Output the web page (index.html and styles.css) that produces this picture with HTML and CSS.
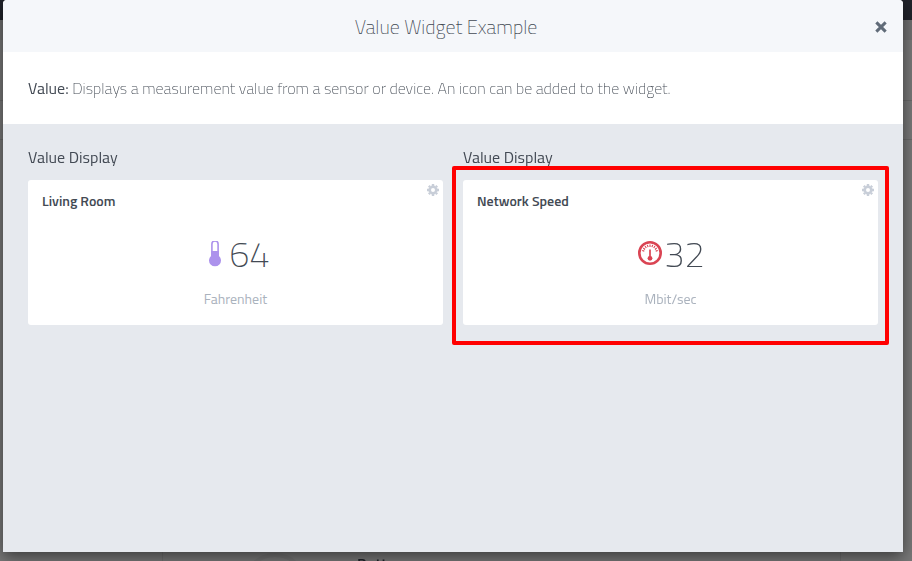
FILE: index.html
```html
<!DOCTYPE html>
<html lang="en">
<head>
    <meta charset="UTF-8">
    <meta name="viewport" content="width=device-width, initial-scale=1.0">
    <title>Value Widget Example</title>
    <link rel="stylesheet" href="styles.css">
</head>
<body>
    <!-- Dashboard behind the modal -->
    <div class="page" aria-hidden="true">
        <div class="navbar"></div>
        <div class="toolbar"></div>
        <div class="page-row"></div>
        <div class="page-row-small"></div>
        <div class="page-main"></div>
        <div class="page-panel">
            <div class="ring"></div>
            <div class="panel-title">Button</div>
        </div>
    </div>

    <div class="modal-wrap">
        <div class="modal" role="dialog" aria-labelledby="modal-title">
            <div class="modal-header">
                <h1 class="modal-title" id="modal-title">Value Widget Example</h1>
                <button class="close-btn" type="button" aria-label="Close">
                    <svg width="12" height="12" viewBox="0 0 12 12">
                        <path d="M2.4 2.4L9.6 9.6M9.6 2.4L2.4 9.6" fill="none" stroke="#606b78" stroke-width="3" stroke-linecap="square"/>
                    </svg>
                </button>
            </div>

            <p class="description"><strong>Value:</strong> Displays a measurement value from a sensor or device. An icon can be added to the widget.</p>

            <div class="widgets">
                <section class="widget">
                    <h2 class="widget-label">Value Display</h2>
                    <div class="card">
                        <button class="gear-btn" type="button" aria-label="Settings">
                            <svg width="12" height="12" viewBox="0 0 12 12">
                                <circle cx="6" cy="6" r="3.3" fill="none" stroke="#c8ced8" stroke-width="2.6"/>
                                <path d="M6 0V2M6 10V12M0 6H2M10 6H12M1.8 1.8L3 3M9 9L10.2 10.2M10.2 1.8L9 3M3 9L1.8 10.2" stroke="#c8ced8" stroke-width="2.4"/>
                            </svg>
                        </button>
                        <h3 class="card-title">Living Room</h3>
                        <div class="value">
                            <svg width="24" height="26" viewBox="0 0 24 26">
                                <path d="M8.9 15V3.1a3.1 3.1 0 0 1 6.2 0V15" fill="#fff" stroke="#ac92ec" stroke-width="1.6"/>
                                <path d="M8.2 10H15.8V14.7A6 6 0 1 1 8.2 14.7Z" fill="#ac92ec"/>
                            </svg>
                            <span>64</span>
                        </div>
                        <div class="unit">Fahrenheit</div>
                    </div>
                </section>

                <section class="widget">
                    <h2 class="widget-label">Value Display</h2>
                    <div class="card">
                        <button class="gear-btn" type="button" aria-label="Settings">
                            <svg width="12" height="12" viewBox="0 0 12 12">
                                <circle cx="6" cy="6" r="3.3" fill="none" stroke="#c8ced8" stroke-width="2.6"/>
                                <path d="M6 0V2M6 10V12M0 6H2M10 6H12M1.8 1.8L3 3M9 9L10.2 10.2M10.2 1.8L9 3M3 9L1.8 10.2" stroke="#c8ced8" stroke-width="2.4"/>
                            </svg>
                        </button>
                        <h3 class="card-title">Network Speed</h3>
                        <div class="value">
                            <svg width="24" height="26" viewBox="0 0 24 26">
                                <g fill="none" stroke="#da4453">
                                    <circle cx="12" cy="12" r="10.7" stroke-width="2.6"/>
                                    <path d="M12 8.5V17" stroke-width="1.7"/>
                                    <path d="M12 3.4V6M9.3 3.8L10.1 6.2M14.7 3.8L13.9 6.2M7 5L8.3 7M17 5L15.7 7M5.3 7L7 8.5M18.7 7L17 8.5M4.2 9.5L6.3 10.1M19.8 9.5L17.7 10.1" stroke-width="1.1"/>
                                </g>
                                <circle cx="12" cy="17.3" r="2.4" fill="#da4453"/>
                            </svg>
                            <span>32</span>
                        </div>
                        <div class="unit">Mbit/sec</div>
                        <div class="highlight"></div>
                    </div>
                </section>
            </div>
        </div>
    </div>
</body>
</html>
```
FILE: styles.css
```css
* {
    margin: 0;
    padding: 0;
    box-sizing: border-box;
}

body {
    font-family: "Titillium Web", Roboto, "Liberation Sans", sans-serif;
    color: #434a54;
    background-color: #787878;
}

button {
    background: none;
    border: none;
    cursor: pointer;
}

svg {
    display: block;
}

/* Dimmed page */
.page {
    position: fixed;
    inset: 0;
    display: flex;
    flex-direction: column;
    overflow: hidden;
}

.navbar {
    height: 20px;
    background-color: #20232a;
}

.toolbar {
    height: 20px;
    background-color: #707070;
}

.page-row {
    height: 61px;
    border-bottom: 1px solid #6a6a6a;
}

.page-row-small {
    height: 39px;
    border-bottom: 1px solid #6a6a6a;
}

.page-main {
    flex: 1;
}

.page-panel {
    display: flex;
    gap: 50px;
    height: 16px;
    margin: 0 71px 0 162px;
    padding: 8px 0 0 80px;
    border: 1px solid #6e6e6e;
    border-width: 0 1px;
}

.ring {
    flex: none;
    width: 64px;
    height: 64px;
    border: 4px solid #727272;
    border-radius: 50%;
}

.panel-title {
    padding-top: 1px;
    font-size: 16px;
    line-height: 20px;
    font-weight: 600;
    color: #20232a;
}

/* Modal */
.modal-wrap {
    position: relative;
    display: flex;
    min-height: 100vh;
    padding: 0 9px 9px 3px;
}

.modal {
    flex: 1;
    display: flex;
    flex-direction: column;
    background-color: #fff;
    border-radius: 4px 4px 0 0;
    box-shadow: 0 5px 15px rgba(0, 0, 0, 0.5);
}

.modal-header {
    display: flex;
    align-items: center;
    padding: 13px 16px 11px 14px;
    background-color: #f5f7fa;
    border-radius: 4px 4px 0 0;
}

.modal-title {
    flex: 1;
    font-size: 20px;
    line-height: 28px;
    font-weight: 200;
    text-align: center;
}

.description {
    padding: 24px 25px;
    font-size: 16px;
    line-height: 24px;
    font-weight: 200;
}

.description strong {
    font-weight: 400;
}

.widgets {
    flex: 1;
    display: grid;
    grid-template-columns: 1fr 1fr;
    align-items: start;
    gap: 20px;
    padding: 20px 25px;
    background-color: #e6e9ee;
}

.widget-label {
    margin-bottom: 10px;
    font-size: 16px;
    line-height: 26px;
    font-weight: 400;
}

.card {
    position: relative;
    padding: 11px 14px 16px;
    background-color: #fff;
    border-radius: 3px;
}

.gear-btn {
    position: absolute;
    top: 4px;
    right: 4px;
}

.card-title {
    font-size: 14px;
    line-height: 20px;
    font-weight: 600;
}

.value {
    display: flex;
    justify-content: center;
    align-items: center;
    gap: 2px;
    padding: 25px 0 17px 2px;
    font-size: 36px;
    line-height: 36px;
    font-weight: 100;
}

.unit {
    font-size: 14px;
    line-height: 20px;
    text-align: center;
    color: #aab2bd;
}

/* Red outline around the highlighted widget */
.highlight {
    position: absolute;
    inset: -14px -11px -20px;
    border: 4px solid #f00;
    border-radius: 2px;
    pointer-events: none;
}
```
